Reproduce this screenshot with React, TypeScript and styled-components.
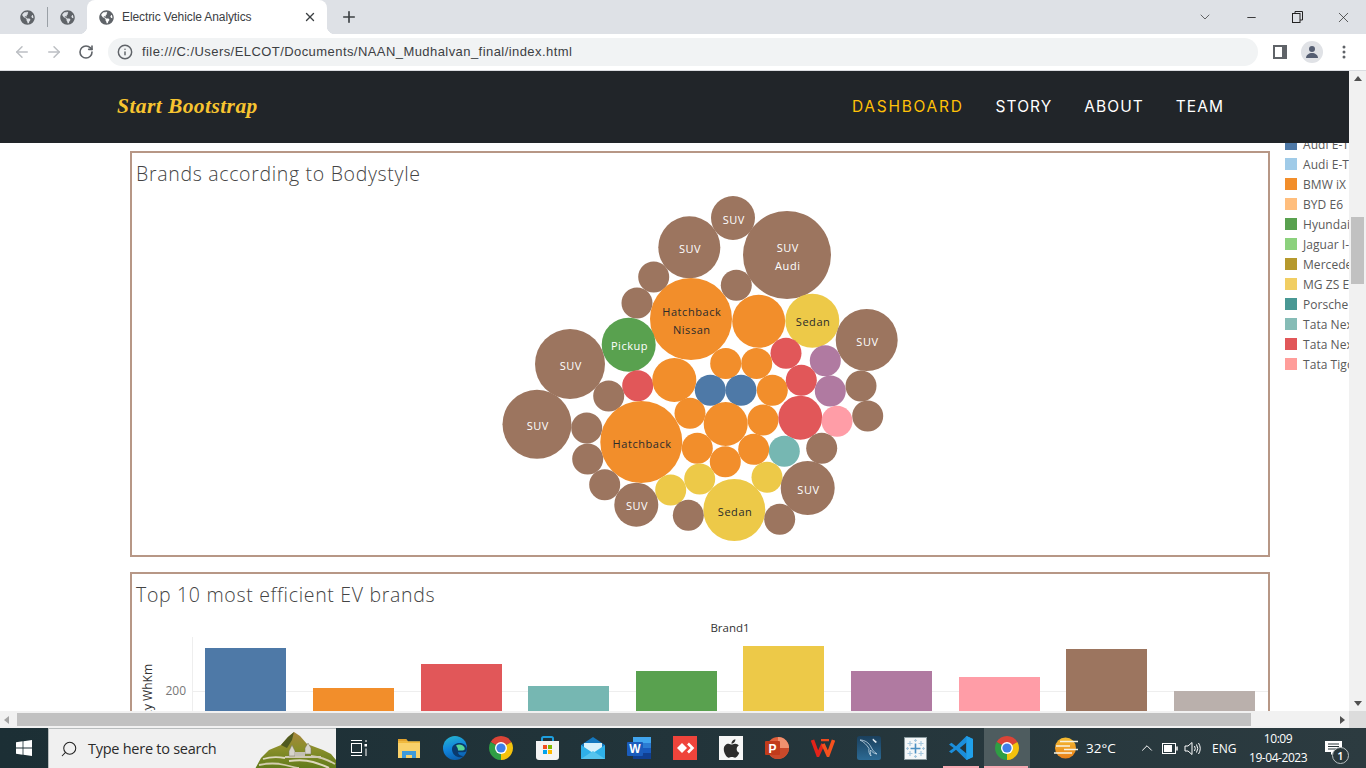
import React from 'react';
import styled, { createGlobalStyle } from 'styled-components';
import { FaGlobeAmericas, FaApple } from 'react-icons/fa';
import { ArrowLeft, ArrowRight, RotateCw, Info, X, Plus, ChevronDown, Minus, Search, ChevronUp } from 'lucide-react';

const Global = createGlobalStyle`
  html, body { margin: 0; padding: 0; overflow: hidden; background: #fff; }
  * { box-sizing: border-box; }
`;

const Screen = styled.div`
  width: 1366px; height: 768px; display: flex; flex-direction: column; overflow: hidden;
  font-family: "Open Sans", "Liberation Sans", sans-serif;
`;

/* ---------- browser chrome ---------- */
const TabStrip = styled.div`
  height: 34px; background: #dee1e6; display: flex; align-items: center; flex-shrink: 0; color: #3c4043; padding-left: 8px;
`;
const MiniTab = styled.div`
  width: 39px; height: 34px; display: flex; align-items: center; justify-content: center; color: #5f6368;
`;
const TabDivider = styled.div`
  width: 1px; height: 20px; background: #9aa0a6;
`;
const ActiveTab = styled.div`
  position: relative; width: 240px; height: 34px; background: #fff;
  border-radius: 8px 8px 0 0; display: flex; align-items: center; padding: 0 10px 0 12px; color: #5f6368;
  &::before, &::after { content: ""; position: absolute; bottom: 0; width: 8px; height: 8px; }
  &::before { left: -8px; background: radial-gradient(circle at 0 0, transparent 8px, #fff 8.5px); }
  &::after { right: -8px; background: radial-gradient(circle at 100% 0, transparent 8px, #fff 8.5px); }
`;
const TabTitle = styled.span`
  margin-left: 8px; font: 12px "Liberation Sans", sans-serif; color: #3c4043; flex: 1; letter-spacing: -0.1px;
`;
const NewTab = styled.div`
  margin-left: 12px; width: 20px; height: 20px; color: #3c4043; display: flex; align-items: center; justify-content: center;
`;
const WindowControls = styled.div`
  margin-left: auto; display: flex; align-items: center; color: #222;
`;
const WinButton = styled.div`
  width: 46px; height: 28px; display: flex; align-items: center; justify-content: center;
`;
const Toolbar = styled.div`
  height: 37px; background: #fff; display: flex; align-items: center; padding: 0 0 1px 0; flex-shrink: 0;
  border-bottom: 1px solid #dadce0;
`;
const NavIcon = styled.div<{ $muted?: boolean }>`
  width: 32px; height: 28px; display: flex; align-items: center; justify-content: center;
  color: ${p => (p.$muted ? '#bcbfc3' : '#5f6368')};
`;
const NavIcons = styled.div`
  display: flex; padding-left: 6px; padding-right: 6px;
`;
const Omnibox = styled.div`
  width: 1150px; height: 28px; border-radius: 14px; background: #f1f3f4; display: flex; align-items: center;
  padding-left: 9px; color: #5f6368;
`;
const Url = styled.span`
  margin-left: 9px; font: 13px "Liberation Sans", sans-serif; color: #3c4043; letter-spacing: 0.435px; white-space: nowrap;
`;
const ToolbarEnd = styled.div`
  display: flex; align-items: center; margin-left: 6px;
`;
const Avatar = styled.div`
  width: 22px; height: 22px; border-radius: 50%; background: #e0e2e6; display: flex; align-items: center; justify-content: center;
`;

/* ---------- page ---------- */
const Viewport = styled.div`
  flex: 1; min-height: 0; display: grid; grid-template-columns: 1349px 17px; grid-template-rows: 640px 17px;
`;
const Page = styled.main`
  overflow: hidden; display: flex; flex-direction: column; background: #fff;
`;
const Navbar = styled.nav`
  position: relative; z-index: 2; height: 72px; background: #212529; display: flex; align-items: center;
  padding: 0 125px 1px 117px; flex-shrink: 0;
`;
const Brand = styled.a`
  font: italic bold 21.5px "Liberation Serif", serif; color: #f7c430; letter-spacing: 0.42px;
`;
const Menu = styled.div`
  margin-left: auto; display: flex; gap: 32px;
`;
const MenuLink = styled.a<{ $active?: boolean }>`
  font: 400 15.5px "Inter", "Open Sans", sans-serif;
  letter-spacing: ${p => (p.$active ? '1.72px' : '1.05px')};
  color: ${p => (p.$active ? '#ffc107' : '#fff')};
`;
const Body = styled.div`
  flex: 1; min-height: 0; display: flex; padding: 8px 0 0 130px; gap: 15px;
`;
const Column = styled.div`
  width: 1140px; flex-shrink: 0; display: flex; flex-direction: column; gap: 15px;
`;
const Card = styled.section<{ $height: number }>`
  height: ${p => p.$height}px; flex-shrink: 0; border: 2px solid #b79786; background: #fff; overflow: hidden;
`;
const CardTitle = styled.h2`
  margin: 0; padding: 6px 0 0 4px; height: 40px; font: 300 19.5px "Open Sans", "Lato", sans-serif;
  letter-spacing: 0.68px; color: #444; line-height: 29px;
`;
const Chart = styled.svg`
  display: block; font-family: "Open Sans", "Liberation Sans", sans-serif;
`;
const Legend = styled.ul`
  list-style: none; margin: -13px 0 0 0; padding: 0; flex-shrink: 0; width: 200px; display: flex; flex-direction: column; gap: 8px;
`;
const LegendRow = styled.li`
  display: flex; align-items: center; height: 12px; white-space: nowrap; gap: 6px;
  font: 12px "Open Sans", sans-serif; color: #5a5a5a; letter-spacing: 0.05px;
`;
const Swatch = styled.span<{ $c: string }>`
  width: 12px; height: 12px; background: ${p => p.$c}; flex-shrink: 0;
`;

/* ---------- scrollbars ---------- */
const VBar = styled.div`
  background: #f1f1f1; position: relative; display: flex; flex-direction: column; align-items: center;
  justify-content: space-between; padding: 5px 0; color: #505050;
`;
const VThumb = styled.div`
  position: absolute; left: 2px; top: 146px; width: 13px; height: 67px; background: #c1c1c1;
`;
const HBar = styled.div`
  background: #f1f1f1; position: relative; display: flex; align-items: center; justify-content: space-between; padding: 0 4px; color: #505050;
`;
const HThumb = styled.div`
  position: absolute; left: 17px; top: 2px; height: 13px; width: 1234px; background: #c1c1c1;
`;
const Corner = styled.div`
  background: #dcdcdc;
`;
const Arrow = styled.span<{ $dir: 'up' | 'down' | 'left' | 'right' }>`
  width: 0; height: 0; display: block; border: 4px solid transparent;
  ${p => p.$dir === 'up' && 'border-bottom-color:#505050;border-top-width:0;border-left-width:4.5px;border-right-width:4.5px;border-bottom-width:5px;'}
  ${p => p.$dir === 'down' && 'border-top-color:#505050;border-bottom-width:0;border-left-width:4.5px;border-right-width:4.5px;border-top-width:5px;'}
  ${p => p.$dir === 'left' && 'border-right-color:#a3a3a3;border-left-width:0;border-top-width:4.5px;border-bottom-width:4.5px;border-right-width:5px;'}
  ${p => p.$dir === 'right' && 'border-left-color:#505050;border-right-width:0;border-top-width:4.5px;border-bottom-width:4.5px;border-left-width:5px;'}
`;

/* ---------- taskbar ---------- */
const Taskbar = styled.footer`
  height: 40px; flex-shrink: 0; margin-top: 1px; display: flex; align-items: center;
  background: linear-gradient(90deg, #1c2f35 0%, #22343a 50%, #2c3b40 100%); color: #fff;
`;
const StartButton = styled.div`
  width: 48px; height: 40px; display: flex; align-items: center; justify-content: center;
`;
const SearchBox = styled.div`
  position: relative; width: 288px; height: 40px; background: #f0f0f0; border: 1px solid #b8bcbd; border-bottom: none; border-right: none;
  display: flex; align-items: center; padding-left: 11px; color: #222; overflow: hidden; flex-shrink: 0;
`;
const MirroredSearch = styled(Search)`
  transform: scaleX(-1);
`;
const SearchText = styled.span`
  margin-left: 10px; font: 14.5px "Open Sans", sans-serif; color: #2b2b2b; letter-spacing: -0.26px;
`;
const Mountain = styled.svg`
  position: absolute; right: 0; top: -1px;
`;
const AppCell = styled.div<{ $mark?: boolean; $active?: boolean; $gap?: boolean }>`
  position: relative; width: 46px; height: 40px; display: flex; align-items: center; justify-content: center; flex-shrink: 0;
  margin-left: ${p => (p.$gap ? '4px' : '0')};
  background: ${p => (p.$active ? '#4e5c5f' : 'transparent')};
  ${p => p.$mark && `&::after { content:""; position:absolute; left:${p.$active ? 0 : 5}px; right:${p.$active ? 2 : 5}px; bottom:0; height:2px; background:#f7a9b3; }`}
`;
const Tray = styled.div`
  flex: 1; display: flex; align-items: center; padding-left: 24px; min-width: 0;
`;
const Temp = styled.span`
  margin-left: 8px; font: 13.5px "Open Sans", sans-serif; width: 49px; flex-shrink: 0;
`;
const TrayIcon = styled.div`
  width: 23px; height: 40px; display: flex; align-items: center; justify-content: center; color: #fff; flex-shrink: 0;
`;
const Lang = styled.span`
  margin-left: 8px; font: 12px "Open Sans", sans-serif; width: 24px; flex-shrink: 0;
`;
const Clock = styled.div`
  margin-left: 13px; width: 58px; flex-shrink: 0; text-align: center; white-space: nowrap; font: 12px/19px "Open Sans", sans-serif; letter-spacing: -0.45px;
`;
const Notify = styled.div`
  position: relative; margin-left: 13px; width: 26px; height: 40px; display: flex; align-items: center; justify-content: center; flex-shrink: 0;
`;
const Badge = styled.span`
  position: absolute; right: -3px; bottom: 4px; width: 17px; height: 17px; border-radius: 50%;
  background: #2a383c; border: 1px solid #b9c0c2; font: 600 11px/15px "Open Sans", sans-serif; text-align: center; color: #fff;
`;

/* ---------- data ---------- */
const C = { blue: '#4e79a7', orange: '#f28e2b', red: '#e15759', teal: '#76b7b2', green: '#59a14f', yellow: '#edc948', purple: '#b07aa1', pink: '#ff9da7', brown: '#9c755f', grey: '#bab0ac' };

type Bubble = [number, number, number, string, string?, string?];
const bubbles: Bubble[] = [
  [733, 218, 22, C.brown, 'SUV'], [689.3, 247.3, 31, C.brown, 'SUV'], [787, 255, 44, C.brown, 'SUV', 'Audi'],
  [653.7, 277, 15.5, C.brown], [736.3, 285.3, 15.5, C.brown], [637, 303, 15.5, C.brown],
  [691, 319, 41, C.orange, 'Hatchback', 'Nissan'], [758.7, 321.3, 26.5, C.orange], [812.3, 320.7, 27, C.yellow, 'Sedan'],
  [866.7, 340, 31, C.brown, 'SUV'], [628.7, 344.7, 27, C.green, 'Pickup'], [570, 364, 35, C.brown, 'SUV'],
  [786, 353.3, 15.5, C.red], [825.3, 360.7, 15.5, C.purple], [725.7, 363.5, 15.5, C.orange], [756.7, 363.5, 15.5, C.orange],
  [637.7, 385.7, 15.5, C.red], [674.3, 380, 22, C.orange], [710.3, 390.3, 15.5, C.blue], [741, 390.3, 15.5, C.blue],
  [772.3, 390.3, 15.5, C.orange], [801.3, 380.3, 15.5, C.red], [830.3, 391, 15.5, C.purple], [861, 386, 15.5, C.brown],
  [867.7, 416, 15.5, C.brown], [608.7, 396, 15.5, C.brown], [537, 424.3, 34.5, C.brown, 'SUV'], [586.7, 428, 15.5, C.brown],
  [587.7, 459, 15.5, C.brown], [641.3, 442, 41, C.orange, 'Hatchback'], [690, 413.3, 15.5, C.orange], [725.7, 424, 22, C.orange],
  [763, 420, 15.5, C.orange], [800.3, 417.7, 22, C.red], [837, 421.3, 15.5, C.pink], [784.3, 451.3, 15.5, C.teal],
  [821.7, 448.3, 15.5, C.brown], [697.3, 448.3, 15.5, C.orange], [753.7, 449.3, 15.5, C.orange], [725.3, 461.7, 15.5, C.orange],
  [699.7, 479, 15.5, C.yellow], [767, 477.3, 15.5, C.yellow], [670.7, 490, 15.5, C.yellow], [604.7, 484.7, 15.5, C.brown],
  [807.7, 488, 27, C.brown, 'SUV'], [636.3, 504.7, 22, C.brown, 'SUV'], [734.3, 510, 31, C.yellow, 'Sedan'],
  [688.3, 515.3, 15.5, C.brown], [779.7, 519.3, 15.5, C.brown],
];
const bars: [number, number, string][] = [
  [205, 648, C.blue], [313, 688, C.orange], [421, 664, C.red], [528, 686, C.teal], [636, 671, C.green],
  [743, 646, C.yellow], [851, 671, C.purple], [959, 677, C.pink], [1066, 649, C.brown], [1174, 691, C.grey],
];
const legend: [string, string][] = [
  ['#4e79a7', 'Audi E-Tron'], ['#a0cbe8', 'Audi E-Tron Sportback'], ['#f28e2b', 'BMW iX'], ['#ffbe7d', 'BYD E6'],
  ['#59a14f', 'Hyundai Kona'], ['#8cd17d', 'Jaguar I-Pace'], ['#b6992d', 'Mercedes EQC'], ['#f1ce63', 'MG ZS EV'],
  ['#499894', 'Porsche Taycan'], ['#86bcb6', 'Tata Nexon EV'], ['#e15759', 'Tata Nexon EV Max'], ['#ff9d9a', 'Tata Tigor EV'],
];

/* ---------- drawn icons ---------- */
const ChromeIcon = () => (
  <svg width="24" height="24" viewBox="0 0 24 24">
    <path d="M12 12L1.610 6A12 12 0 0 1 22.390 6Z" fill="#db4437" />
    <path d="M12 12L22.390 6A12 12 0 0 1 12 24Z" fill="#f4c20d" />
    <path d="M12 12L12 24A12 12 0 0 1 1.610 6Z" fill="#2f9e44" />
    <circle cx="12" cy="12" r="6" fill="#fff" />
    <circle cx="12" cy="12" r="4.600" fill="#3f7fe8" />
  </svg>
);
const WinLogo = () => (
  <svg width="16" height="16" viewBox="0 0 16 16"><path d="M0 2.200L6.600 1.300V7.500H0zM7.400 1.200L16 0V7.500H7.400zM0 8.400H6.600V14.700L0 13.800zM7.400 8.400H16V16L7.400 14.800z" fill="#fff" /></svg>
);
const TaskView = () => (
  <svg width="16" height="16" viewBox="0 0 16 16" fill="none" stroke="#fff" strokeWidth="1">
    <path d="M0 0.500H11M0 15.500H11" /><rect x="0.500" y="3.500" width="10" height="9" /><rect x="13.500" y="4" width="2.500" height="2.500" fill="#fff" stroke="none" /><path d="M15 0V2M15 8.500V16" />
  </svg>
);
const Explorer = () => (
  <svg width="22" height="19" viewBox="0 0 22 19">
    <path d="M0 0h8l2 2.500h12V19H0z" fill="#f9d16a" /><path d="M0 0h8l2 2.500H0z" fill="#e3a32c" /><rect y="2.500" width="22" height="1.500" fill="#f0b93c" />
    <path d="M4 19V12h14v7h-4v-3H8v3z" fill="#3f9ada" /><rect x="8" y="16" width="6" height="3" fill="#f9d16a" />
  </svg>
);
const Edge = () => (
  <svg width="24" height="24" viewBox="0 0 24 24">
    <defs><linearGradient id="edge-g" x1="0.2" y1="0" x2="0.5" y2="1"><stop offset="0" stopColor="#27b4cf" /><stop offset="0.5" stopColor="#1186dd" /><stop offset="1" stopColor="#0b5fae" /></linearGradient></defs>
    <circle cx="12" cy="12" r="12" fill="url(#edge-g)" />
    <path d="M9 13c0-3.500 3.500-6 7.500-6 4 0 7.500 2.500 7.500 6 0 2.200-1.700 3.300-3.500 3.300h-5.500c.2 2 2.300 3.700 5.500 4-1.500.8-3.500 1.200-5.500.7C11.500 20 9 17 9 13z" fill="#0a3a6e" />
    <path d="M13 9.500c3-1.800 7-.8 8.500 2 .8 1.700-.3 3-2 3h-4.500c0-2-.8-3.500-2-5z" fill="#57d695" />
  </svg>
);
const Store = () => (
  <svg width="23" height="24" viewBox="0 0 23 24">
    <path d="M6 7V2.500A1.500 1.500 0 0 1 7.500 1h8A1.500 1.500 0 0 1 17 2.500V7" fill="none" stroke="#1e9fde" strokeWidth="2" />
    <path d="M0 5h23v16a3 3 0 0 1-3 3H3a3 3 0 0 1-3-3z" fill="#f4f4f4" />
    <rect x="7" y="9" width="4" height="4" fill="#f25022" /><rect x="12" y="9" width="4" height="4" fill="#7fba00" />
    <rect x="7" y="14" width="4" height="4" fill="#00a4ef" /><rect x="12" y="14" width="4" height="4" fill="#ffb900" />
  </svg>
);
const Mail = () => (
  <svg width="24" height="22" viewBox="0 0 24 22">
    <path d="M0 8L12 0l12 8v3H0z" fill="#1578bf" /><path d="M3 6h18v9H3z" fill="#d8f1fb" />
    <path d="M0 8l12 8 12-8v14H0z" fill="#2fb0e8" /><path d="M0 22l12-8 12 8z" fill="#55c4ee" />
  </svg>
);
const Word = () => (
  <svg width="24" height="22" viewBox="0 0 24 22">
    <rect x="6" y="0" width="18" height="6" fill="#41a5ee" /><rect x="6" y="6" width="18" height="5" fill="#2b7cd3" />
    <rect x="6" y="11" width="18" height="5" fill="#185abd" /><rect x="6" y="16" width="18" height="6" fill="#103f91" />
    <rect x="0" y="5" width="16" height="14" rx="1" fill="#1a5cbc" />
    <text x="8" y="16" textAnchor="middle" fontSize="12" fontWeight="700" fill="#fff" fontFamily="Liberation Sans, sans-serif">W</text>
  </svg>
);
const Anydesk = () => (
  <svg width="24" height="24" viewBox="0 0 24 24">
    <rect width="24" height="24" fill="#ef443b" />
    <path d="M4 12l5-5 5 5-5 5z" fill="#fff" /><path d="M15 7.500l4.500 4.500-4.500 4.500" fill="none" stroke="#fff" strokeWidth="2.600" />
  </svg>
);
const AppleFrame = styled.div`
  width: 24px; height: 24px; background: #f6f6f6; display: flex; align-items: center; justify-content: center; color: #2b2b2b;
`;
const Ppt = () => (
  <svg width="24" height="22" viewBox="0 0 24 22">
    <circle cx="13" cy="11" r="11" fill="#e2603c" /><path d="M13 11h11a11 11 0 0 1-20.500 5.500z" fill="#c9492a" /><path d="M13 0a11 11 0 0 1 11 11H13z" fill="#f0916f" />
    <rect x="0" y="4" width="15" height="14" rx="1" fill="#c13b1b" />
    <text x="7.500" y="15.500" textAnchor="middle" fontSize="12" fontWeight="700" fill="#fff" fontFamily="Liberation Sans, sans-serif">P</text>
  </svg>
);
const Wps = () => (
  <svg width="24" height="18" viewBox="0 0 24 18" fill="none" strokeWidth="3.600">
    <path d="M1.500 1L7 16 12 5" stroke="#e2231a" /><path d="M12 5l5 11L22.500 1" stroke="#f4511e" /><path d="M10 1H18" stroke="#f04a1e" strokeWidth="2.500" />
  </svg>
);
const MySql = () => (
  <svg width="24" height="24" viewBox="0 0 24 24">
    <defs><linearGradient id="mysql-g" x1="0" y1="0" x2="0" y2="1"><stop offset="0" stopColor="#1a3f5c" /><stop offset="1" stopColor="#2c6a94" /></linearGradient></defs>
    <rect width="24" height="24" rx="2.500" fill="url(#mysql-g)" />
    <path d="M3 4c5 0 9 3 11 7 1.500 3 3 5 6 7-3-.5-5-2-6.500-4-.5 2 0 4 .5 6-2-2-2.500-5-2-7.500C10 9 7 6 3 4z" fill="none" stroke="#c7dbe9" strokeWidth="0.800" />
    <path d="M16 2.500l4 3.500-1.500 1-3-3z" fill="#e4edf3" />
  </svg>
);
const Tableau = () => (
  <svg width="23" height="23" viewBox="0 0 23 23">
    <rect x="0.500" y="0.500" width="22" height="22" fill="#f4f7f8" stroke="#8a9a9f" />
    <g stroke="#4a8fc2" strokeWidth="1.600"><path d="M11.500 6.500v10M6.500 11.500h10" /></g>
    <g stroke="#a6c8df" strokeWidth="1.200"><path d="M6 4v5M3.500 6.500h5M17 4v5M14.500 6.500h5M6 14v5M3.500 16.500h5M17 14v5M14.500 16.500h5M11.500 2v3M10 3.500h3M11.500 18v3M10 19.500h3M3.500 10v3M2 11.500h3M19.500 10v3M18 11.500h3" /></g>
  </svg>
);
const VsCode = () => (
  <svg width="24" height="24" viewBox="0 0 24 24">
    <path d="M17.500 0L24 3v18l-6.500 3L7 13.800 2.500 17.300 0 15.600 4.700 12 0 8.400 2.500 6.700 7 10.200z" fill="#1b8edb" />
    <path d="M17.500 6.500L10.800 12l6.700 5.500z" fill="#22343a" />
    <path d="M17.500 0L24 3v18l-6.500 3z" fill="#20a0ea" />
    <path d="M17.500 6.500L17.500 17.500 19 12z" fill="#20a0ea" />
  </svg>
);
const Weather = () => (
  <svg width="24" height="22" viewBox="0 0 24 22">
    <defs><linearGradient id="sun-g" x1="0" y1="0" x2="0" y2="1"><stop offset="0" stopColor="#f5bc32" /><stop offset="1" stopColor="#e8801a" /></linearGradient></defs>
    <circle cx="11.500" cy="11" r="10.500" fill="url(#sun-g)" />
    <path d="M6 4.500H24M2 9H16M10 12.500H24M0 16H18" stroke="#f8f3e2" strokeWidth="1.700" />
  </svg>
);
const Mountains = () => (
  <Mountain width="81" height="41" viewBox="0 0 81 41">
    <defs><linearGradient id="mt-g" x1="0" y1="0" x2="0" y2="1"><stop offset="0" stopColor="#a8863d" /><stop offset="0.45" stopColor="#8a8f2a" /><stop offset="1" stopColor="#5f7a1a" /></linearGradient></defs>
    <path d="M0 41L6 30 14 22 26 17 33 9 39 4 45 8 52 16 60 19 68 22 76 26 81 32V41z" fill="url(#mt-g)" />
    <path d="M39 4L33 9 26 17 32 20 37 12z" fill="#4f5a20" />
    <path d="M8 31q10-3 22-1" stroke="#ddd8bd" strokeWidth="1.800" fill="none" />
    <path d="M4 37q14-3 26 0t14 3" stroke="#d3cdae" strokeWidth="1.800" fill="none" />
    <path d="M34 33q14-2 24 1t16 6" stroke="#ddd8bd" strokeWidth="2" fill="none" />
    <path d="M56 28q12 1 24 8" stroke="#d3cdae" strokeWidth="1.800" fill="none" />
    <path d="M30 29H66" stroke="#cfc9b4" strokeWidth="2.200" />
    <path d="M34 28V23l3-6 3 6v5zM50 26v-6l3-5 3 5v6z" fill="#d7d4cc" stroke="#77705c" strokeWidth="0.500" />
    <path d="M40 24H50v4H40z" fill="#c4c0b4" />
  </Mountain>
);

export default function App() {
  return (
    <Screen>
      <Global />
      <TabStrip>
        <MiniTab><FaGlobeAmericas size={15} /></MiniTab>
        <TabDivider />
        <MiniTab><FaGlobeAmericas size={15} /></MiniTab>
        <ActiveTab>
          <FaGlobeAmericas size={15} />
          <TabTitle>Electric Vehicle Analytics</TabTitle>
          <X size={14} strokeWidth={2.4} color="#3c4043" />
        </ActiveTab>
        <NewTab><Plus size={18} strokeWidth={2.2} /></NewTab>
        <WindowControls>
          <WinButton><ChevronDown size={16} strokeWidth={1} /></WinButton>
          <WinButton><Minus size={13} strokeWidth={1.6} /></WinButton>
          <WinButton>
            <svg width="11" height="12" viewBox="0 0 11 12" fill="none" stroke="#222" strokeWidth="1"><rect x="0.500" y="2.500" width="7.500" height="9" /><path d="M3 2.500V0.500H10.500V9H8" /></svg>
          </WinButton>
          <WinButton><X size={17} strokeWidth={1} /></WinButton>
        </WindowControls>
      </TabStrip>
      <Toolbar>
        <NavIcons>
          <NavIcon $muted><ArrowLeft size={18} /></NavIcon>
          <NavIcon $muted><ArrowRight size={18} /></NavIcon>
          <NavIcon><RotateCw size={16} strokeWidth={2.4} /></NavIcon>
        </NavIcons>
        <Omnibox>
          <Info size={16} strokeWidth={2.2} />
          <Url>file:///C:/Users/ELCOT/Documents/NAAN_Mudhalvan_final/index.html</Url>
        </Omnibox>
        <ToolbarEnd>
          <NavIcon>
            <svg width="14" height="14" viewBox="0 0 14 14"><path d="M0 0H14V14H0zM2 2V12H9V2z" fill="#5f6368" fillRule="evenodd" /></svg>
          </NavIcon>
          <NavIcon>
            <Avatar>
              <svg width="14" height="14" viewBox="0 0 14 14" fill="#555e72"><circle cx="7" cy="4" r="3" /><path d="M1 13c0-3 3-5 6-5s6 2 6 5z" /></svg>
            </Avatar>
          </NavIcon>
          <NavIcon>
            <svg width="4" height="14" viewBox="0 0 4 14" fill="#5f6368"><circle cx="2" cy="2" r="1.500" /><circle cx="2" cy="7" r="1.500" /><circle cx="2" cy="12" r="1.500" /></svg>
          </NavIcon>
        </ToolbarEnd>
      </Toolbar>

      <Viewport>
        <Page>
          <Navbar>
            <Brand>Start Bootstrap</Brand>
            <Menu>
              <MenuLink $active>DASHBOARD</MenuLink>
              <MenuLink>STORY</MenuLink>
              <MenuLink>ABOUT</MenuLink>
              <MenuLink>TEAM</MenuLink>
            </Menu>
          </Navbar>
          <Body>
            <Column>
              <Card $height={406}>
                <CardTitle>Brands according to Bodystyle</CardTitle>
                <Chart width="1136" height="362" viewBox="132 193 1136 362">
                  {bubbles.map(([x, y, r, c, a, b], i) => {
                    const light = a === 'SUV' || a === 'Pickup';
                    return (
                      <g key={i}>
                        <circle cx={x} cy={y} r={r} fill={c} />
                        {a && (
                          <text x={x + 0.8} y={b ? y - 3 : y + 5.5} textAnchor="middle" fontSize="11" fill={light ? '#fff' : '#2b2b2b'} letterSpacing="0.55">{a}</text>
                        )}
                        {b && (
                          <text x={x + 0.8} y={y + 15} textAnchor="middle" fontSize="11" fill={light ? '#fff' : '#2b2b2b'} letterSpacing="0.55">{b}</text>
                        )}
                      </g>
                    );
                  })}
                </Chart>
              </Card>
              <Card $height={300}>
                <CardTitle>Top 10 most efficient EV brands</CardTitle>
                <Chart width="1136" height="256" viewBox="132 614 1136 256">
                  <text x="730" y="632" textAnchor="middle" fontSize="11.500" fill="#333">Brand1</text>
                  <line x1="192.500" y1="637" x2="192.500" y2="870" stroke="#eeeeee" />
                  <line x1="192" y1="691.500" x2="1268" y2="691.500" stroke="#eeeeee" />
                  <text x="186" y="695" textAnchor="end" fontSize="12" fill="#777">200</text>
                  <text transform="translate(152 664) rotate(-90)" textAnchor="end" fontSize="12" fill="#333">Efficiency WhKm</text>
                  {bars.map(([x, y, c]) => (
                    <rect key={x} x={x} y={y} width="81" height={870 - y} fill={c} />
                  ))}
                </Chart>
              </Card>
            </Column>
            <Legend>
              {legend.map(([c, n], i) => (
                <LegendRow key={i}><Swatch $c={c} />{n}</LegendRow>
              ))}
            </Legend>
          </Body>
        </Page>
        <VBar>
          <Arrow $dir="up" />
          <VThumb />
          <Arrow $dir="down" />
        </VBar>
        <HBar>
          <Arrow $dir="left" />
          <HThumb />
          <Arrow $dir="right" />
        </HBar>
        <Corner />
      </Viewport>

      <Taskbar>
        <StartButton><WinLogo /></StartButton>
        <SearchBox>
          <MirroredSearch size={18} strokeWidth={1.4} />
          <SearchText>Type here to search</SearchText>
          <Mountains />
        </SearchBox>
        <AppCell><TaskView /></AppCell>
        <AppCell $gap><Explorer /></AppCell>
        <AppCell><Edge /></AppCell>
        <AppCell><ChromeIcon /></AppCell>
        <AppCell><Store /></AppCell>
        <AppCell><Mail /></AppCell>
        <AppCell><Word /></AppCell>
        <AppCell><Anydesk /></AppCell>
        <AppCell><AppleFrame><FaApple size={21} /></AppleFrame></AppCell>
        <AppCell><Ppt /></AppCell>
        <AppCell><Wps /></AppCell>
        <AppCell><MySql /></AppCell>
        <AppCell><Tableau /></AppCell>
        <AppCell $mark><VsCode /></AppCell>
        <AppCell $mark $active><ChromeIcon /></AppCell>
        <Tray>
          <Weather />
          <Temp>32°C</Temp>
          <TrayIcon><ChevronUp size={18} strokeWidth={1.3} /></TrayIcon>
          <TrayIcon>
            <svg width="16" height="11" viewBox="0 0 16 11" fill="none" stroke="#fff"><rect x="0.500" y="0.500" width="13" height="10" /><rect x="2" y="2" width="8" height="7" fill="#fff" stroke="none" /><path d="M15 3.500v4" strokeWidth="1.500" /></svg>
          </TrayIcon>
          <TrayIcon>
            <svg width="17" height="15" viewBox="0 0 17 15" fill="none" stroke="#fff" strokeWidth="1"><path d="M1 5H4L8 1.500V13.500L4 10H1z" /><path d="M10.500 5q1.500 2.500 0 5M12.500 3.500q2.500 4 0 8M14.500 2q3.500 5.500 0 11" /></svg>
          </TrayIcon>
          <Lang>ENG</Lang>
          <Clock>10:09<br />19-04-2023</Clock>
          <Notify>
            <svg width="17" height="14" viewBox="0 0 17 14"><path d="M0 0H17V11H9l-3 3v-3H0z" fill="#fff" /><path d="M3 3H14M3 5.500H14M3 8H11" stroke="#2a383c" /></svg>
            <Badge>1</Badge>
          </Notify>
        </Tray>
      </Taskbar>
    </Screen>
  );
}
